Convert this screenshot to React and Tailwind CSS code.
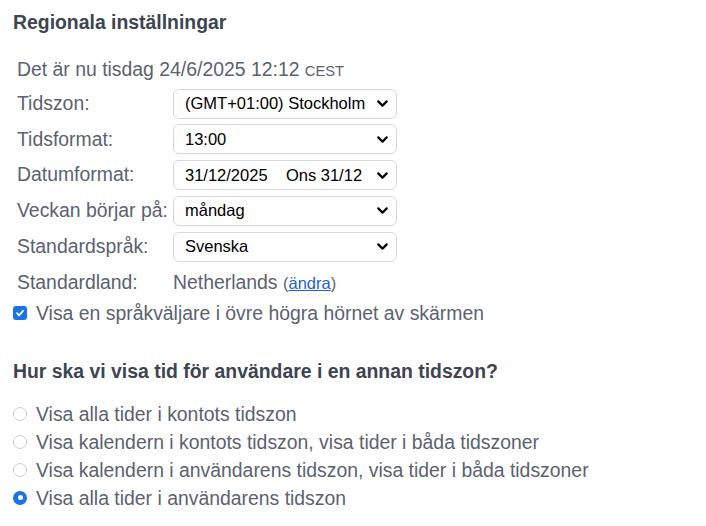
import { ChevronDown } from "lucide-react";

function Select({ children }) {
  return (
    <div className="flex h-[30px] w-[224px] items-center justify-between rounded-[6px] border border-[#d5d8dd] bg-white pl-[11px] pr-[5px] text-[16.5px] text-black">
      <span className="whitespace-pre">{children}</span>
      <ChevronDown size={17} strokeWidth={3} className="text-black" />
    </div>
  );
}

function Row({ label, children }) {
  return (
    <div className="flex h-[30px] items-center">
      <div className="w-[156px] text-[19.4px] text-[#5b6270]">{label}</div>
      {children}
    </div>
  );
}

function Radio({ checked, children }) {
  return (
    <div className="flex h-[28px] items-center gap-[9px]">
      {checked ? (
        <span className="flex h-[14px] w-[14px] items-center justify-center rounded-full bg-[#1a73e8]">
          <span className="h-[5px] w-[5px] rounded-full bg-white" />
        </span>
      ) : (
        <span className="h-[14px] w-[14px] rounded-full border border-[#c9ccd1] bg-white" />
      )}
      <span className="text-[19.4px] leading-[28px] text-[#5b6270]">{children}</span>
    </div>
  );
}

export default function App() {
  return (
    <div
      className="h-[526px] w-[706px] bg-white px-[13px] pt-[9px]"
      style={{ fontFamily: '"Liberation Sans", Arial, sans-serif' }}
    >
      <h2 className="text-[19.4px] leading-[27px] font-bold text-[#3d4452]">Regionala inställningar</h2>

      <div className="mt-[21px] pl-[4px]">
        <div className="text-[19.4px] leading-[25.5px] text-[#5b6270]">
          Det är nu tisdag 24/6/2025 12:12 <span className="text-[14.7px]">CEST</span>
        </div>

        <div className="mt-[4px] flex flex-col gap-[5.75px]">
          <Row label="Tidszon:">
            <Select>(GMT+01:00) Stockholm</Select>
          </Row>
          <Row label="Tidsformat:">
            <Select>13:00</Select>
          </Row>
          <Row label="Datumformat:">
            <Select>{"31/12/2025    Ons 31/12"}</Select>
          </Row>
          <Row label="Veckan börjar på:">
            <Select>måndag</Select>
          </Row>
          <Row label="Standardspråk:">
            <Select>Svenska</Select>
          </Row>
          <Row label="Standardland:">
            <div className="text-[19.4px] text-[#5b6270]">
              Netherlands <span className="text-[16.5px]">(</span>
              <a href="#" className="text-[16.5px] text-[#1f5fd1] underline">ändra</a>
              <span className="text-[16.5px]">)</span>
            </div>
          </Row>
        </div>
      </div>

      <div className="mt-[1px] flex h-[30px] items-center gap-[9px]">
        <span className="flex h-[14px] w-[14px] items-center justify-center rounded-[3px] bg-[#1a73e8]">
          <svg width="10" height="10" viewBox="0 0 10 10" fill="none">
            <path d="M2 5.2 L4.1 7.3 L8 2.8" stroke="white" strokeWidth="1.8" strokeLinecap="round" strokeLinejoin="round" />
          </svg>
        </span>
        <span className="text-[19.4px] text-[#5b6270]">Visa en språkväljare i övre högra hörnet av skärmen</span>
      </div>

      <h3 className="mt-[31px] text-[19.4px] leading-[25.5px] font-bold text-[#3d4452]">
        Hur ska vi visa tid för användare i en annan tidszon?
      </h3>

      <div className="mt-[15px] flex flex-col">
        <Radio>Visa alla tider i kontots tidszon</Radio>
        <Radio>Visa kalendern i kontots tidszon, visa tider i båda tidszoner</Radio>
        <Radio>Visa kalendern i användarens tidszon, visa tider i båda tidszoner</Radio>
        <Radio checked>Visa alla tider i användarens tidszon</Radio>
      </div>
    </div>
  );
}
